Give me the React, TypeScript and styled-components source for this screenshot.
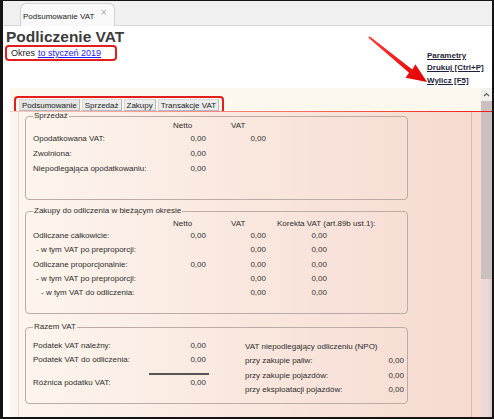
import React from 'react';
import styled, {createGlobalStyle} from 'styled-components';

const GlobalStyle = createGlobalStyle`
    html, body {
        margin:0;
        padding:0;
        background:#ffffff;
    }
    body {
        font-family:"Liberation Sans", Arial, sans-serif;
        color:#2c2c2c;
    }
`;

const Frame = styled.div`
    position:relative;
    box-sizing:border-box;
    width:494px;
    height:419px;
    border-style:solid;
    border-color:#141414;
    border-width:1px 2px 2px 3px;
    background:#fff;
    display:flex;
    flex-direction:column;
    overflow:hidden;
`;

const TabStrip = styled.div`
    height:24px;
    background:#f0f0f0;
    border-bottom:1px solid #dadada;
    padding-left:17px;
    display:flex;
    align-items:flex-end;
    flex-shrink:0;
`;

const DocTab = styled.div`
    position:relative;
    box-sizing:border-box;
    width:95px;
    height:23px;
    margin-bottom:-1px;
    background:#f9f9f9;
    border:1px solid #d2d2d2;
    border-bottom:none;
    border-radius:6px 6px 0 0;
    font-size:8px;
    color:#222;
    padding:8px 0 0 2px;
    span{
        position:absolute;
        right:7px;
        top:2px;
        font-size:11px;
        color:#a8a8a8;
    }
`;

const Header = styled.div`
    height:62px;
    display:flex;
    justify-content:space-between;
    flex-shrink:0;
    padding-left:2px;
`;

const TitleBlock = styled.div`
    display:flex;
    flex-direction:column;
    align-items:flex-start;
`;

const Title = styled.h1`
    margin:2px 0 0 1px;
    font-size:15.5px;
    line-height:17px;
    font-weight:bold;
    color:#3c3c3c;
`;

const PeriodBox = styled.div`
    box-sizing:border-box;
    height:16px;
    width:112px;
    border:2px solid #e41e1e;
    border-radius:4px;
    padding:0 0 0 4px;
    display:flex;
    align-items:center;
    font-size:9px;
    color:#222;
    a{
        color:#1a1aff;
        text-decoration:underline;
        margin-left:3px;
    }
`;

const Links = styled.div`
    align-self:flex-end;
    width:65px;
    display:flex;
    flex-direction:column;
    padding-bottom:1px;
    a{
        font-size:8px;
        line-height:12.5px;
        font-weight:bold;
        color:#1f1f3a;
        text-decoration:underline;
        white-space:nowrap;
    }
`;

const Arrow = styled.svg`
    position:absolute;
    left:357px;
    top:29px;
    overflow:visible;
`;

const Content = styled.div`
    position:relative;
    flex:1;
    display:flex;
    margin-left:7px;
    min-height:0;
`;

const Main = styled.div`
    flex:1;
    display:flex;
    flex-direction:column;
    min-width:0;
`;

const TabsBar = styled.div`
    height:23px;
    box-sizing:border-box;
    padding:6px 0 0 4px;
    background:#fdf8ee;
    flex-shrink:0;
`;

const TabsOutline = styled.div`
    box-sizing:border-box;
    display:inline-flex;
    gap:2px;
    height:18px;
    border:2px solid #e41e1e;
    border-radius:4px;
    padding:1px 3px;
`;

const ViewTab = styled.div<{$active?: boolean}>`
    box-sizing:border-box;
    height:12px;
    padding:0 2px;
    font-size:8px;
    line-height:11px;
    color:#222;
    background:${p => p.$active ? '#e4e4e4' : '#ececec'};
    border:1px solid #b9b9b9;
    border-top-color:#d8d8d8;
    border-left-color:#d8d8d8;
`;

const RedLine = styled.div`
    position:absolute;
    left:0;
    right:0;
    top:23px;
    height:1px;
    background:linear-gradient(to right, rgba(240,120,120,0.35), rgba(240,60,60,0.7) 60%, #f01e1e);
`;

const Panel = styled.div`
    flex:1;
    display:flex;
    padding:0 9px 0 8px;
    background:linear-gradient(to right, #fdf6ee, #f9e6dd 55%, #f6dad1);
    min-height:0;
`;

const PanelInner = styled.div`
    flex:1;
    border-left:1px solid #ecdcd5;
    border-right:1px solid #d5bcb4;
    padding-left:6px;
`;

const Group = styled.fieldset<{$h: number; $top?: number}>`
    box-sizing:border-box;
    width:383px;
    height:${p => p.$h}px;
    margin:${p => p.$top || 0}px 0 0 0;
    padding:0 0 0 6px;
    border:1px solid #bcaca5;
    border-radius:4px;
    font-size:8px;
    legend{
        padding:0 1px;
        margin-left:1px;
        font-size:8px;
        line-height:10px;
        color:#2c2c2c;
    }
`;

const Grid = styled.div<{$cols: string}>`
    display:grid;
    grid-template-columns:${p => p.$cols};
    padding-left:1px;
`;

const HeadCell = styled.div<{$pad?: number}>`
    height:10px;
    line-height:10px;
    padding-left:${p => p.$pad || 0}px;
    white-space:nowrap;
    color:#2c2c2c;
`;

const Label = styled.div<{$indent?: number; $h?: number}>`
    height:${p => p.$h || 15}px;
    line-height:${p => p.$h || 15}px;
    padding-left:${p => p.$indent || 0}px;
    white-space:nowrap;
    color:#2c2c2c;
`;

const Value = styled.div<{$h?: number}>`
    height:${p => p.$h || 15}px;
    line-height:${p => p.$h || 15}px;
    text-align:right;
    white-space:nowrap;
    color:#333;
`;

const Columns = styled.div`
    display:flex;
    gap:36px;
    padding-left:1px;
    margin-top:7px;
`;

const SumLine = styled.div`
    margin:6px 0 1px 116px;
    width:60px;
    height:1.5px;
    background:#555;
`;

const Scrollbar = styled.div`
    width:11px;
    flex-shrink:0;
    display:flex;
    flex-direction:column;
    background:linear-gradient(to right, #ecdada 60%, #dccbce);
`;

const ScrollUp = styled.div`
    height:13px;
    background:#f3f0f0;
    display:flex;
    justify-content:center;
    align-items:center;
`;

const Thumb = styled.div`
    height:178px;
    background:#cbbfbf;
`;

const sales = [
    ['Opodatkowana VAT:', '0,00', '0,00'],
    ['Zwolniona:', '0,00', ''],
    ['Niepodlegająca opodatkowaniu:', '0,00', ''],
];

const purchases: [string, number, string, string, string][] = [
    ['Odliczane całkowicie:', 0, '0,00', '0,00', '0,00'],
    ['- w tym VAT po preproporcji:', 3, '', '0,00', '0,00'],
    ['Odliczane proporcjonalnie:', 0, '0,00', '0,00', '0,00'],
    ['- w tym VAT po preproporcji:', 3, '', '0,00', '0,00'],
    ['- w tym VAT do odliczenia:', 8, '', '0,00', '0,00'],
];

const npo = [
    ['przy zakupie paliw:', '0,00'],
    ['przy zakupie pojazdów:', '0,00'],
    ['przy eksploatacji pojazdów:', '0,00'],
];

const App = () => {
  return(
    <>
    <GlobalStyle/>
    <Frame>
        <TabStrip>
            <DocTab>Podsumowanie VAT<span>×</span></DocTab>
        </TabStrip>
        <Header>
            <TitleBlock>
                <Title>Podliczenie VAT</Title>
                <PeriodBox>Okres<a>to styczeń 2019</a></PeriodBox>
            </TitleBlock>
            <Links>
                <a>Parametry</a>
                <a>Drukuj [Ctrl+P]</a>
                <a>Wylicz [F5]</a>
            </Links>
        </Header>
        <Arrow width="70" height="56" viewBox="0 0 70 56">
            <defs>
                <linearGradient id="arr" x1="0" y1="0" x2="1" y2="1">
                    <stop offset="0" stopColor="#ff3a3a"/>
                    <stop offset="1" stopColor="#e40000"/>
                </linearGradient>
            </defs>
            <polygon
                points="9.6,6.2 52.3,39.4 55.4,34.2 67,52 45.6,47.8 49.0,42.7 8.4,7.8"
                fill="url(#arr)"
            />
        </Arrow>
        <Content>
            <Main>
                <TabsBar>
                    <TabsOutline>
                        <ViewTab $active>Podsumowanie</ViewTab>
                        <ViewTab>Sprzedaż</ViewTab>
                        <ViewTab>Zakupy</ViewTab>
                        <ViewTab>Transakcje VAT</ViewTab>
                    </TabsOutline>
                </TabsBar>
                <Panel>
                    <PanelInner>
                        <Group $h={89}>
                            <legend>Sprzedaż</legend>
                            <Grid $cols="140px 33px 60px">
                                <HeadCell/>
                                <HeadCell>Netto</HeadCell>
                                <HeadCell $pad={25}>VAT</HeadCell>
                                {sales.map(([label, netto, vat]) => (
                                    <React.Fragment key={label}>
                                        <Label>{label}</Label>
                                        <Value>{netto}</Value>
                                        <Value>{vat}</Value>
                                    </React.Fragment>
                                ))}
                            </Grid>
                        </Group>
                        <Group $h={108} $top={6}>
                            <legend>Zakupy do odliczenia w bieżącym okresie</legend>
                            <Grid $cols="140px 33px 60px 61px" style={{marginTop: 3}}>
                                <HeadCell/>
                                <HeadCell>Netto</HeadCell>
                                <HeadCell $pad={25}>VAT</HeadCell>
                                <HeadCell $pad={11}>Korekta VAT (art.89b ust.1):</HeadCell>
                                {purchases.map(([label, indent, netto, vat, kor], i) => (
                                    <React.Fragment key={i}>
                                        <Label $indent={indent} $h={14.3}>{label}</Label>
                                        <Value $h={14.3}>{netto}</Value>
                                        <Value $h={14.3}>{vat}</Value>
                                        <Value $h={14.3}>{kor}</Value>
                                    </React.Fragment>
                                ))}
                            </Grid>
                        </Group>
                        <Group $h={82} $top={8}>
                            <legend>Razem VAT</legend>
                            <Columns>
                                <div>
                                    <Grid $cols="140px 33px" style={{paddingLeft: 0}}>
                                        <Label $h={14}>Podatek VAT należny:</Label>
                                        <Value $h={14}>0,00</Value>
                                        <Label $h={14}>Podatek VAT do odliczenia:</Label>
                                        <Value $h={14}>0,00</Value>
                                    </Grid>
                                    <SumLine/>
                                    <Grid $cols="140px 33px" style={{paddingLeft: 0}}>
                                        <Label $h={14}>Różnica podatku VAT:</Label>
                                        <Value $h={14}>0,00</Value>
                                    </Grid>
                                </div>
                                <Grid $cols="120px 39px" style={{paddingLeft: 0, marginTop: 1}}>
                                    <Label $h={14}>VAT niepodlegający odliczeniu (NPO)</Label>
                                    <Value $h={14}/>
                                    {npo.map(([label, val]) => (
                                        <React.Fragment key={label}>
                                            <Label $h={14.5}>{label}</Label>
                                            <Value $h={14.5}>{val}</Value>
                                        </React.Fragment>
                                    ))}
                                </Grid>
                            </Columns>
                        </Group>
                    </PanelInner>
                </Panel>
            </Main>
            <Scrollbar>
                <ScrollUp>
                    <svg width="7" height="5" viewBox="0 0 7 5">
                        <path d="M1 4 L3.5 1.5 L6 4" stroke="#606060" strokeWidth="1.2" fill="none"/>
                    </svg>
                </ScrollUp>
                <Thumb/>
            </Scrollbar>
            <RedLine/>
        </Content>
    </Frame>
    </>
  )
}

export default App;
